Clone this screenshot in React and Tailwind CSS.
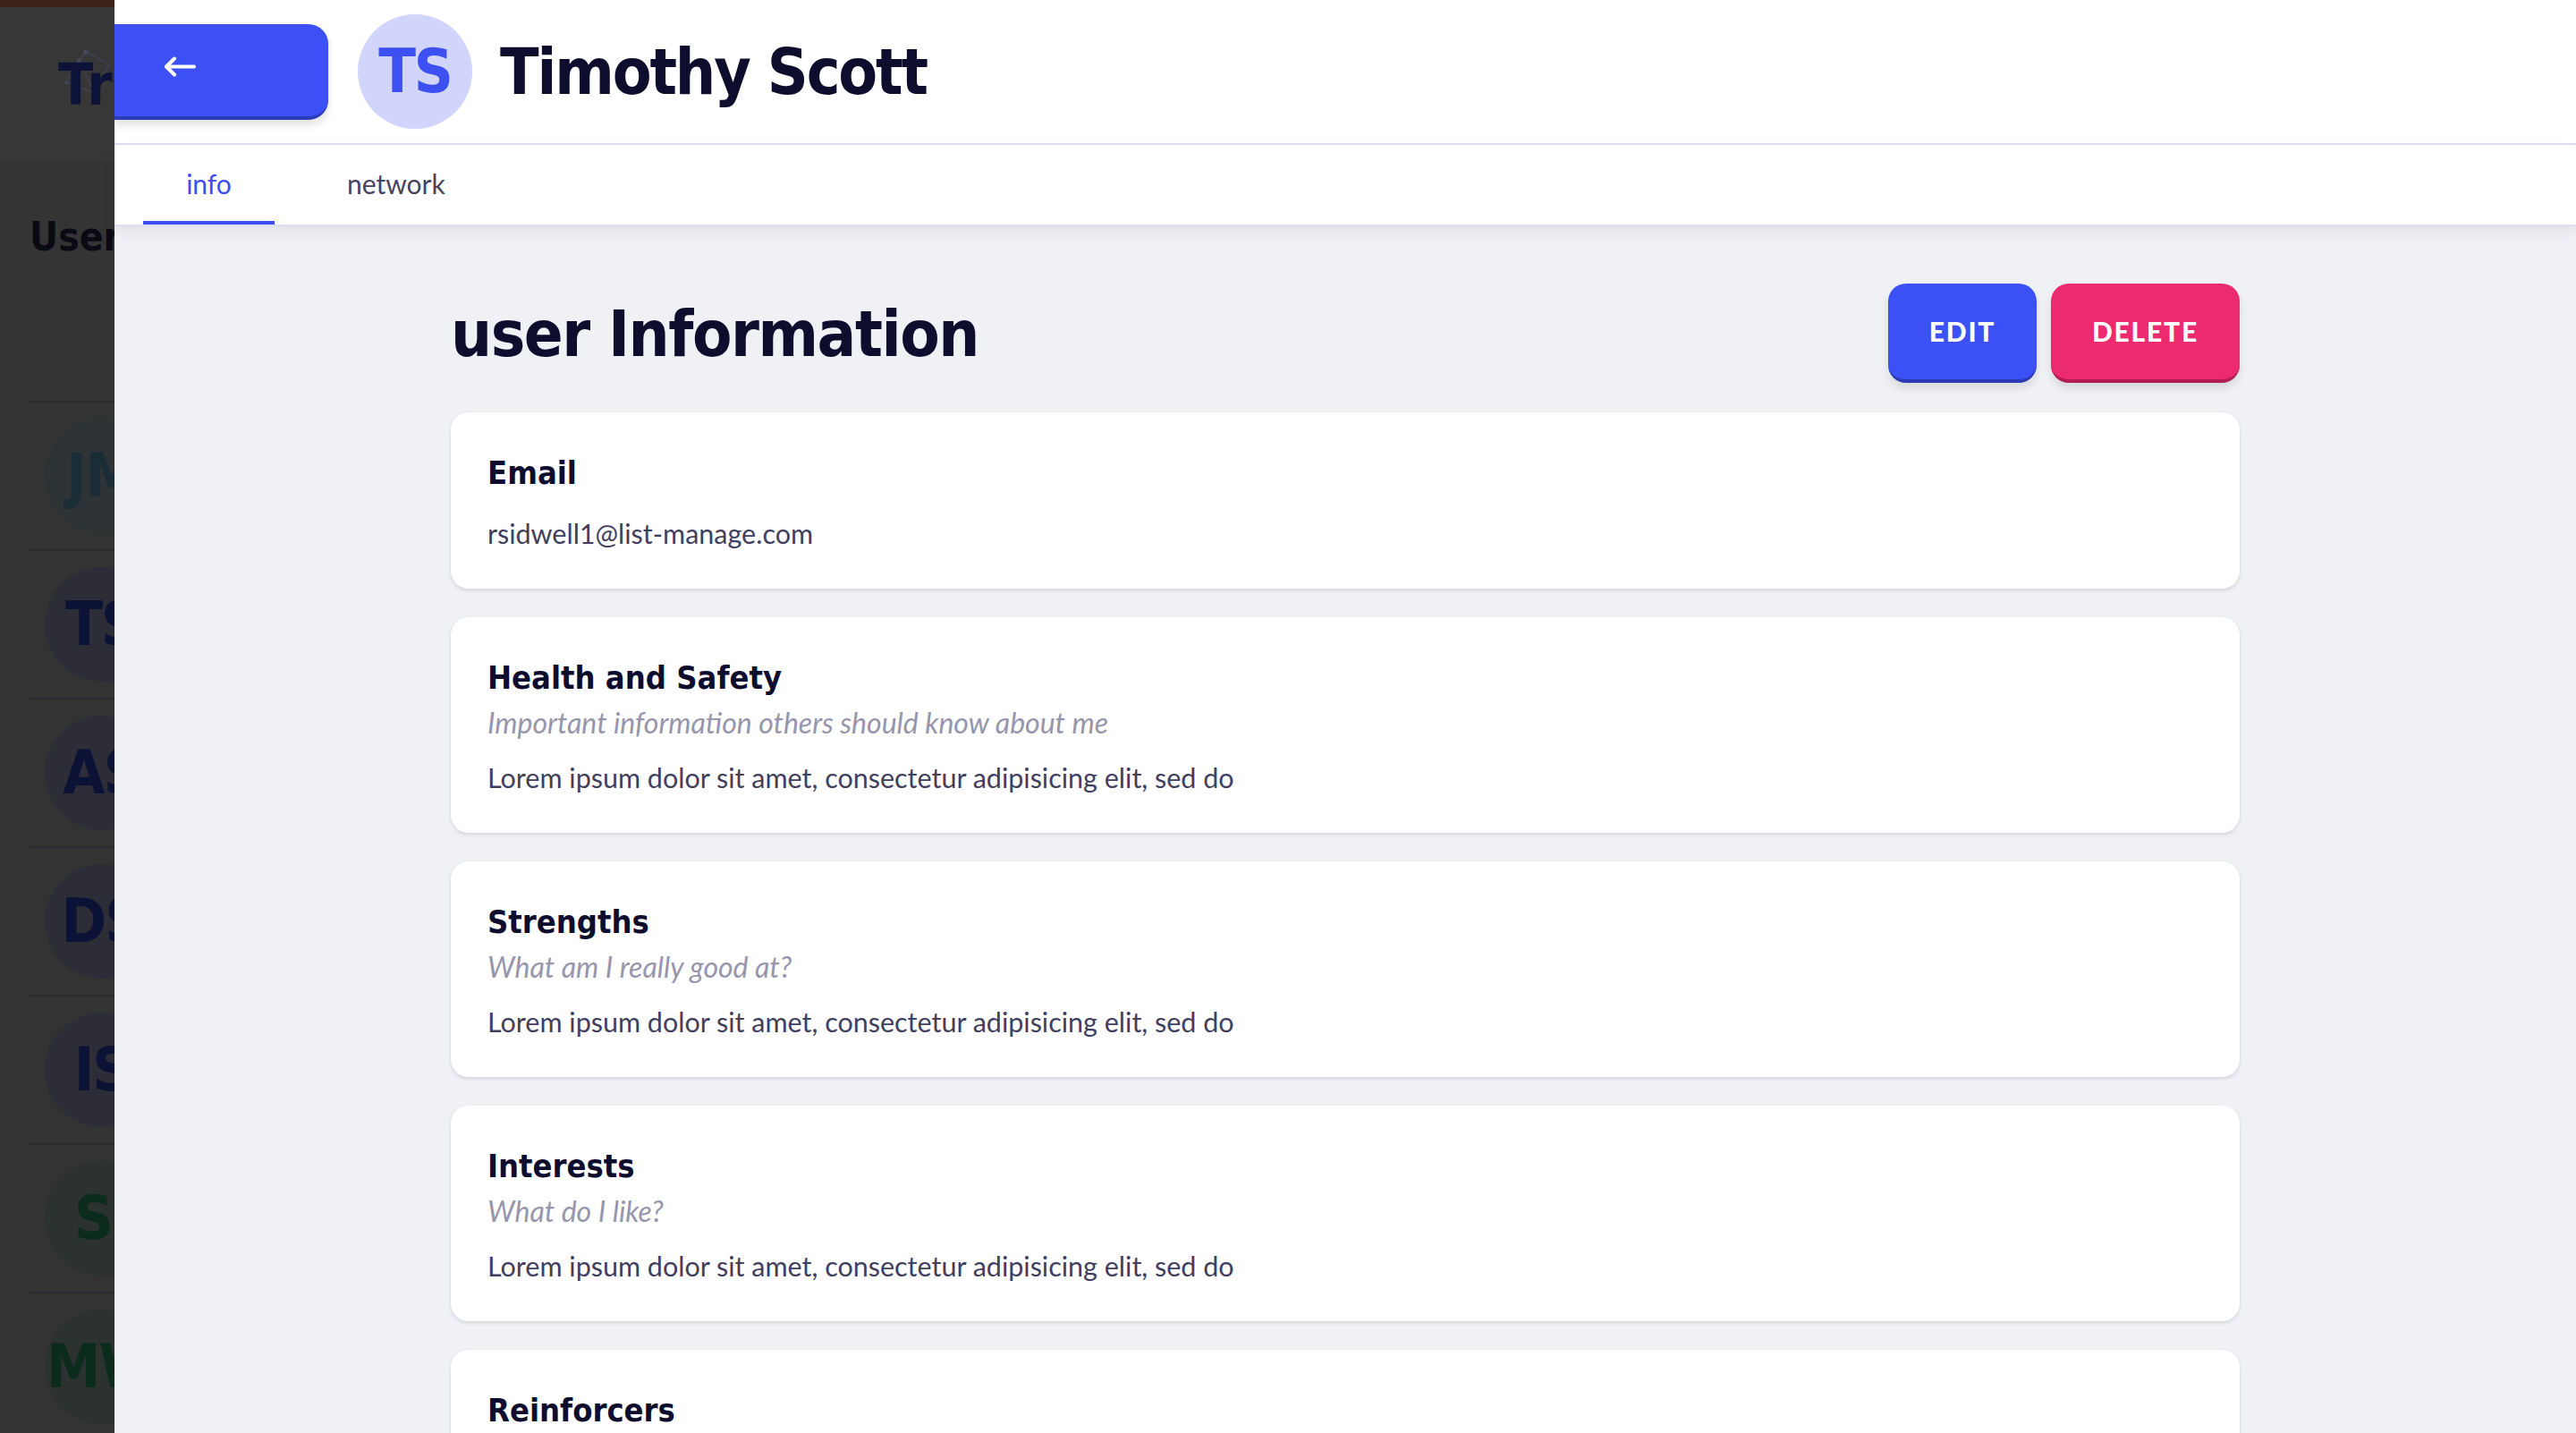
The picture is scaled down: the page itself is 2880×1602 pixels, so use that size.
import React from 'react';

const display = "font-['DejaVu_Sans_Condensed','DejaVu_Sans',sans-serif] [font-stretch:condensed] font-bold";
const body = "font-['Lato','Open_Sans',sans-serif]";

const users = [
  { initials: 'JM', circle: 'bg-[#2e3436]', text: 'text-[#1a2c36]' },
  { initials: 'TS', circle: 'bg-[#2c2d36]', text: 'text-[#0c1236]' },
  { initials: 'AS', circle: 'bg-[#2c2d36]', text: 'text-[#0c1236]' },
  { initials: 'DS', circle: 'bg-[#2c2d36]', text: 'text-[#0c1236]' },
  { initials: 'IS', circle: 'bg-[#2c2d36]', text: 'text-[#0c1236]' },
  { initials: 'SI', circle: 'bg-[#2c322f]', text: 'text-[#0b2b1d]' },
  { initials: 'MW', circle: 'bg-[#2c322f]', text: 'text-[#0b2b1d]' },
];

const lorem = 'Lorem ipsum dolor sit amet, consectetur adipisicing elit, sed do';

const sections = [
  { title: 'Email', value: 'rsidwell1@list-manage.com' },
  { title: 'Health and Safety', hint: 'Important information others should know about me', value: lorem },
  { title: 'Strengths', hint: 'What am I really good at?', value: lorem },
  { title: 'Interests', hint: 'What do I like?', value: lorem },
  { title: 'Reinforcers', hint: 'What motivates me?', value: lorem },
];

function Avatar({ initials, circle, text }) {
  return (
    <div className={`w-[128px] h-[128px] shrink-0 rounded-full flex items-center justify-center ${circle}`}>
      <span className={`${display} text-[68px] leading-none tracking-[-0.03em] ${text}`}>{initials}</span>
    </div>
  );
}

function BackdropList() {
  return (
    <aside className="w-[128px] shrink-0 overflow-hidden bg-[#333333] flex flex-col">
      <div className="h-[8px] shrink-0 bg-[#3a2218]" />
      <div className="h-[174px] shrink-0 bg-[#373737] flex items-center pl-[65px] whitespace-nowrap relative">
        <svg className="absolute left-[66px] top-[40px]" width="80" height="80" viewBox="0 0 80 80" fill="none">
          <g stroke="#45475a" strokeWidth="1.5" opacity="0.7">
            <path d="M30 10 L56 24 L40 56 L8 44 Z" />
            <path d="M22 20 L30 10 M22 20 L40 56" />
          </g>
          <g fill="#45475a">
            <circle cx="30" cy="10" r="3" />
            <circle cx="22" cy="20" r="2.5" />
            <circle cx="40" cy="56" r="3" />
            <circle cx="8" cy="44" r="2" />
          </g>
        </svg>
        <span className={`${display} relative text-[64px] leading-none text-[#0d1238]`}>Transitions</span>
      </div>
      <div className="h-[163px] shrink-0 bg-[#343434] flex items-center pl-[33px] pt-[2px] whitespace-nowrap">
        <span className={`${display} text-[44px] leading-none text-[#0a0a12]`}>Users</span>
      </div>
      <div className="h-[103px] shrink-0" />
      {users.map((u) => (
        <div key={u.initials} className="shrink-0 ml-[32px] border-t-2 border-[#2a2a30] pt-[18px] pb-[18px] pl-[18px]">
          <Avatar {...u} />
        </div>
      ))}
    </aside>
  );
}

function ArrowLeft() {
  return (
    <svg width="36" height="23" viewBox="0 0 36 23" fill="none" stroke="white" strokeWidth="4" strokeLinecap="round" strokeLinejoin="round">
      <path d="M34 11.5 H3" />
      <path d="M12 2.5 L3 11.5 L12 20.5" />
    </svg>
  );
}

function InfoCard({ title, hint, value }) {
  return (
    <div className="bg-white rounded-[20px] shadow-[0_2px_4px_rgba(20,20,60,0.12)] px-[41px] pt-[46px] pb-[42px]">
      <h3 className={`${display} text-[36px] leading-[44px] text-[#0f0d2e]`}>{title}</h3>
      {hint && (
        <p className={`${body} italic text-[32px] leading-[40px] mt-[8px] text-[#9795ab]`}>{hint}</p>
      )}
      <p className={`${body} text-[30.5px] leading-[40px] text-[#413e5e] ${hint ? 'mt-[21px]' : 'mt-[25px]'}`}>{value}</p>
    </div>
  );
}

export default function App() {
  return (
    <div className="flex w-[2880px] h-[1602px] overflow-hidden">
      <BackdropList />
      <main className="flex-1 min-w-0 flex flex-col bg-[#f0f1f5]">
        <header className="h-[162px] shrink-0 bg-white border-b-2 border-[#dde0f0] flex items-center">
          <button className="h-[107px] w-[239px] bg-[#3d50f5] rounded-r-[22px] border-b-[4px] border-[#2c3bb8] shadow-[0_6px_10px_rgba(0,0,0,0.12)] flex items-start pl-[55px] pt-[36px]">
            <ArrowLeft />
          </button>
          <div className="ml-[33px]">
            <Avatar initials="TS" circle="bg-[#d1d4fb]" text="text-[#3d50f2]" />
          </div>
          <h1 className={`${display} ml-[31px] text-[71px] leading-none tracking-[-0.03em] text-[#0f0d2e]`}>Timothy Scott</h1>
        </header>
        <nav className={`${body} relative z-10 h-[91px] shrink-0 bg-white border-b-2 border-[#dde0f0] shadow-[0_6px_14px_rgba(40,40,90,0.07)] flex items-end text-[30px]`}>
          <div className="ml-[32px] w-[147px] h-[89px] border-b-4 border-[#3d4ef0] flex items-center justify-center pt-[1px] text-[#3d4ef0]">info</div>
          <div className="ml-[32px] px-[49px] h-[89px] border-b-4 border-transparent flex items-center justify-center pt-[1px] text-[#46435f]">network</div>
        </nav>
        <section className="w-[2000px] mx-auto pt-[64px] flex flex-col">
          <div className="h-[111px] flex items-center justify-between">
            <h2 className={`${display} text-[72px] leading-none tracking-[-0.02em] text-[#0f0d2e]`}>user Information</h2>
            <div className={`${body} flex gap-[16px] text-[30px] font-black tracking-[0.06em] text-white`}>
              <button className="h-[111px] w-[166px] rounded-[20px] bg-[#3b50f5] border-b-[4px] border-[#2b3bb4] shadow-[0_6px_10px_rgba(0,0,0,0.1)]">EDIT</button>
              <button className="h-[111px] w-[211px] rounded-[20px] bg-[#ec2a6f] border-b-[4px] border-[#b11d53] shadow-[0_6px_10px_rgba(0,0,0,0.1)]">DELETE</button>
            </div>
          </div>
          <div className="mt-[33px] flex flex-col gap-[32px]">
            {sections.map((s) => (
              <InfoCard key={s.title} {...s} />
            ))}
          </div>
        </section>
      </main>
    </div>
  );
}
